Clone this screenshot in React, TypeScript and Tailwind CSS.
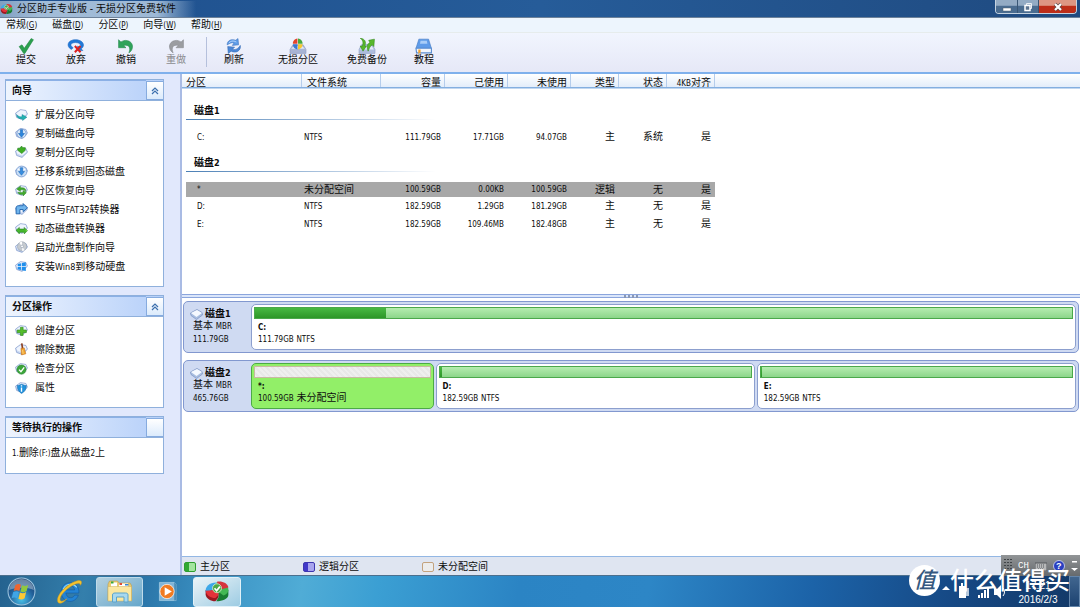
import { useState } from "react";
import type { ReactNode } from "react";

/* Latin runs are set a little smaller than the Chinese text around them. */
function Mixed({ text, large }: { text: string; large?: boolean }) {
  return (
    <>
      {text.split(/([\x21-\x7e]+)/).map((run, i) =>
        i % 2 ? (
          <span key={i} className={`font-['DejaVu_Sans_Condensed','DejaVu_Sans',sans-serif] ${large ? "text-[9px]" : "text-[8px]"}`}>{run}</span>
        ) : (
          run
        )
      )}
    </>
  );
}

/* ---------- icons ---------- */

function DiskBase() {
  return (
    <>
      <path d="M1 9.5 10 3l10 1.5 3 7L13 21 3 17.5Z" fill="#c9d8f2" stroke="#7f97cb" strokeWidth="1.3" />
      <path d="M2.5 9.6 10.5 4.2l9 1.3 2 5.5-8.500 6.400L4 13.800Z" fill="#eef4fd" />
    </>
  );
}

const overlays: Record<string, ReactNode> = {
  extend: <path d="M3 12c3 4 7 5 10 4v-4l9 5-8 6v-3C8 21 3 18 3 12Z" fill="#24b3b0" stroke="#0d7f96" strokeWidth=".8" />,
  copyDisk: (
    <>
      <circle cx="12" cy="12" r="8.500" fill="#d8e8f8" stroke="#6c92cc" strokeWidth="1.500" />
      <path d="M10 5h4v7h3.500L12 19l-5.500-7H10Z" fill="#2b86dd" stroke="#1563b5" />
    </>
  ),
  copyPart: <path d="m12 0 2.500 3H19v5l-6.500 6L5 8V4h4.500Z" fill="#3fae22" stroke="#1e7d16" />,
  migrate: (
    <>
      <circle cx="12" cy="12" r="10" fill="#c8ddf4" stroke="#7a9cd2" strokeWidth="1.500" />
      <path d="M10 5h4v7h3.500L12 19l-5.500-7H10Z" fill="#378ee0" stroke="#1c68b8" />
      <path d="m5 7 3 2M19 7l-3 2" stroke="#fff" strokeWidth="2" />
    </>
  ),
  recover: <path d="M3 9 10 4v3c7-1 11 2 10 7-2-3-5-4-10-3v3ZM21 16l-6 6v-3c-5 1-9-1-10-4 3 1 6 1 10 0v-3Z" fill="#42ac2b" stroke="#207a19" strokeWidth=".8" />,
  convert: <path d="M2 20V9c0-3 2-4 5-4h8V1l8 8-8 7v-4H9v8Z" fill="#6fb4ec" stroke="#195ea9" strokeWidth="1.600" />,
  dynamic: (
    <>
      <path d="m2 15 6-5v3h9v-3l6 6-6 6v-3H8v3Z" fill="#46b72d" stroke="#207a19" />
      <path d="m18 12 2 3h3l-2 3" fill="#7cdb4f" />
    </>
  ),
  cd: (
    <>
      <circle cx="13" cy="10" r="8.500" fill="#c6cbd0" stroke="#8a98aa" />
      <path d="m13 10-5-7a9 9 0 0 1 5-1.500Z" fill="#fff" />
      <path d="m13 10 5 7a9 9 0 0 1-5 1.500Z" fill="#f6f8fa" />
      <circle cx="13" cy="10" r="2.500" fill="#fff" stroke="#8593a5" />
    </>
  ),
  windows: <path d="M5 7.500 11 6v5.500H5Zm7.500-1.800L20 4v7.500h-7.500ZM5 13h6v5.500L5 17Zm7.500 0H20v7.500l-7.500-1.800Z" fill="#1f8fec" />,
  add: <path d="M10 6h5v5h6v5h-6v5h-5v-5H4v-5h6Z" fill="#55bd2b" stroke="#237f17" />,
  wipe: (
    <>
      <path d="m11 1 3-.5 1.500 10-3 .5Z" fill="#8a3f20" />
      <path d="m11 10 6-1 3 11-8 2Z" fill="#f2a832" stroke="#bd6515" />
      <path d="m14 13 1 7" stroke="#fff0b5" />
    </>
  ),
  check: (
    <>
      <circle cx="12" cy="14" r="8.500" fill="#3ca63a" stroke="#1f7a2c" />
      <path d="m7.500 14 3.500 4 6-8" fill="none" stroke="#fff" strokeWidth="2.500" />
    </>
  ),
  info: (
    <>
      <path d="M4 8c4 1 5-2 8-2s5 3 9 2c0 8-3 12-9 15C7 20 4 16 4 8Z" fill="#2192dc" stroke="#1468ae" />
      <path d="M12 12v8M12 8v2" stroke="#fff" strokeWidth="2.500" />
    </>
  ),
};

function SideIcon({ name }: { name: string }) {
  return (
    <svg viewBox="0 0 24 24" className="h-[13px] w-[13px] shrink-0" aria-hidden="true">
      <DiskBase />
      {overlays[name]}
    </svg>
  );
}

function Pie({ className }: { className: string }) {
  return (
    <svg viewBox="0 0 32 28" className={className} aria-hidden="true">
      <path d="M2 12v6c1 5 6 8 12 8l4-5V12Z" fill="#9c1720" />
      <path d="M18 13v8l-3 5c8 0 15-3 15-8v-6Z" fill="#187d32" />
      <path d="M15 11 2 15C1 8 7 3 15 3Z" fill="#3da8e8" />
      <path d="m15 12-13 1c1 6 6 9 12 9l4-4Z" fill="#e4323a" />
      <path d="M15 3c9-1 16 4 15 10-1 3-3 5-6 6l-8-6Z" fill="#43b854" />
      <path d="M16 2c7-1 13 2 14 7l-12 3Z" fill="#d5343c" />
      <circle cx="16" cy="10" r="5.500" fill="#4ca945" stroke="#d7edcf" />
      <path d="m13 10 2.500 3 4-5" fill="none" stroke="#fff" strokeWidth="2" />
    </svg>
  );
}

const toolIcons: Record<string, ReactNode> = {
  commit: <path d="M3 15 8 12l4 6L24 1l4 2-15 24h-2Z" fill="#2ba04f" stroke="#22863f" />,
  discard: (
    <>
      <path d="M7 20C-3 15 0 3 14 3s18 11 10 16l3 3h-9v-8l3 2c5-4 0-8-7-8-8 0-11 5-4 9Z" fill="#2178d8" stroke="#1766c2" />
      <path d="m13 14 10 11M23 14 13 25" stroke="#dc2020" strokeWidth="3.500" />
    </>
  ),
  undo: <path d="m2 3 4 4c10-7 23 0 20 11-1 4-3 6-6 8 4-9 0-15-9-13l4 4H2Z" fill="#30a35b" stroke="#24884a" />,
  redo: <path d="m28 3-4 4C14 0 1 7 4 18c1 4 3 6 6 8-4-9 0-15 9-13l-4 4h13Z" fill="#9b9da1" stroke="#85878c" />,
  refresh: (
    <>
      <path d="M3 12C3 4 11 1 18 4l4-3 1 11-11 1 3-4c-5-2-6 0-12 3Z" fill="#5e9ce7" stroke="#3a71bd" />
      <path d="M26 13c2 8-7 15-16 10l-5 4-1-12 12 1-4 4c6 1 10-1 14-7Z" fill="#4b87d6" stroke="#3469b3" />
      <path d="M6 9c4-5 9-4 13-2" fill="none" stroke="#c6e1ff" strokeWidth="1.500" />
    </>
  ),
  lossless: (
    <>
      <path d="m1 20 5-8h18l5 8v7H1Z" fill="#a8b4d4" stroke="#8b99bf" />
      <path d="m3 19 5-5h14l5 5Z" fill="#e3e9f7" />
      <path d="M14 10V1C8 2 6 6 6 10Z" fill="#e3442d" />
      <path d="M15 10V1c6 1 8 5 8 9Z" fill="#47aa3e" />
      <path d="M14 11v9c-5-1-8-4-8-9Z" fill="#3a78d4" />
      <path d="M15 11v9c5-1 8-4 8-9Z" fill="#f7c82f" />
    </>
  ),
  backup: (
    <>
      <path d="m1 20 5-9h18l5 9v7H1Z" fill="#aebddd" stroke="#8f9fc5" />
      <path d="m3 20 4-6h16l4 6Z" fill="#e3eaf8" />
      <path d="M3 0c9 2 11 7 8 14h3l-6 9-5-9h4C9 8 8 4 3 0ZM17 23c-3-8-2-12 3-15l-2-4L28 2l-1 13-3-3c-4 3-5 6-7 11Z" fill="#57b82b" stroke="#33881a" />
    </>
  ),
  tutorial: (
    <>
      <path d="M6 2h17l5 16H1Z" fill="#5e9be9" stroke="#3c74c0" />
      <path d="m9 5-1 5h13l-1-5Z" fill="#a9cdf8" />
      <path d="M1 18h27v8H2Z" fill="#f2f6fc" stroke="#5d8fd1" strokeWidth="2" />
      <path d="M5 20h4v8l-2-2-2 2Z" fill="#f4a32e" />
    </>
  ),
};

function DriveIcon() {
  return (
    <svg viewBox="0 0 26 22" className="h-[11px] w-[13px] shrink-0" aria-hidden="true">
      <path d="m1 8 13-7 10 6 1 5-12 9L2 13Z" fill="#a9bee0" stroke="#7f96c4" strokeWidth="1.500" />
      <path d="M2 8 14 2l10 6-11 8Z" fill="#f5f9ff" />
    </svg>
  );
}

/* ---------- data ---------- */

const menus = [
  ["常规", "G"],
  ["磁盘", "D"],
  ["分区", "P"],
  ["向导", "W"],
  ["帮助", "H"],
];

const tools = [
  { icon: "commit", label: "提交", width: "w-[50px]" },
  { icon: "discard", label: "放弃", width: "w-[50px]" },
  { icon: "undo", label: "撤销", width: "w-[50px]" },
  { icon: "redo", label: "重做", width: "w-[50px]", disabled: true },
  { icon: "refresh", label: "刷新", width: "w-[54px]" },
  { icon: "lossless", label: "无损分区", width: "w-[74px]" },
  { icon: "backup", label: "免费备份", width: "w-[64px]" },
  { icon: "tutorial", label: "教程", width: "w-[50px]" },
];

const wizards = [
  ["extend", "扩展分区向导"],
  ["copyDisk", "复制磁盘向导"],
  ["copyPart", "复制分区向导"],
  ["migrate", "迁移系统到固态磁盘"],
  ["recover", "分区恢复向导"],
  ["convert", "NTFS与FAT32转换器"],
  ["dynamic", "动态磁盘转换器"],
  ["cd", "启动光盘制作向导"],
  ["windows", "安装Win8到移动硬盘"],
];

const operations = [
  ["add", "创建分区"],
  ["wipe", "擦除数据"],
  ["check", "检查分区"],
  ["info", "属性"],
];

const columns = ["分区", "文件系统", "容量", "己使用", "未使用", "类型", "状态", "4KB对齐"];

const disk1 = [["C:", "NTFS", "111.79GB", "17.71GB", "94.07GB", "主", "系统", "是"]];
const disk2 = [
  ["*", "未分配空间", "100.59GB", "0.00KB", "100.59GB", "逻辑", "无", "是"],
  ["D:", "NTFS", "182.59GB", "1.29GB", "181.29GB", "主", "无", "是"],
  ["E:", "NTFS", "182.59GB", "109.46MB", "182.48GB", "主", "无", "是"],
];

/* ---------- sidebar ---------- */

function Panel({ title, items, children }: { title: string; items?: string[][]; children?: ReactNode }) {
  const [open, setOpen] = useState(true);
  return (
    <section className="border border-[#8fb0dc] bg-white">
      <header className="flex h-[21px] border-b border-[#8fb0dc] bg-linear-to-r from-[#eef4fe] to-[#b5cff9]">
        <h2 className="flex-1 border-t border-[#8bb0e6] pl-[6px] text-[10px] leading-[20px] font-bold">{title}</h2>
        <button
          type="button"
          aria-label={`折叠 ${title}`}
          onClick={() => items && setOpen(!open)}
          className="mt-px flex w-[17px] items-center justify-center border border-r-0 border-[#86abdf] bg-linear-to-b from-white to-[#dcebfc]"
        >
          {items && (
            <svg viewBox="0 0 8 8" className="h-2 w-2" fill="none" stroke="#3b6fae" strokeWidth="1.2" aria-hidden="true">
              <path d="m1 4 3-3 3 3M1 7l3-3 3 3" />
            </svg>
          )}
        </button>
      </header>
      {items && open && (
        <ul className="pt-1 pb-[10px]">
          {items.map(([icon, label]) => (
            <li key={label}>
              <button type="button" className="flex h-[19px] w-full items-center gap-[7px] pl-[9px] text-left whitespace-nowrap">
                <SideIcon name={icon} />
                <span><Mixed text={label} large /></span>
              </button>
            </li>
          ))}
        </ul>
      )}
      {children}
    </section>
  );
}

/* ---------- partition table ---------- */

function Group({ name, rows, selected, first }: { name: string; rows: string[][]; selected?: number; first?: boolean }) {
  return (
    <tbody>
      <tr>
        <th colSpan={8} className={`p-0 text-left align-bottom font-bold ${first ? "h-[32px]" : "h-[26px]"}`}>
          <div className="pl-2 leading-[16px]"><Mixed text={name} large /></div>
          <div className="h-px w-[250px] bg-linear-to-r from-[#4a7fb5] to-white" />
        </th>
      </tr>
      <tr><td colSpan={8} className={`p-0 ${first ? "h-[8px]" : "h-[10px]"}`} /></tr>
      {rows.map((row, i) => (
        <tr key={row[0]} className={i === selected ? "bg-[#a8a8a8]" : ""}>
          {row.map((cell, c) => (
            <td
              key={c}
              className={`p-0 leading-[14px] ${i === selected ? "h-[14px]" : "h-[18px]"} ${c === 0 ? "pl-[11px]" : c === 1 ? "pl-[2px]" : "pr-1 text-right"}`}
            >
              <Mixed text={cell} />
            </td>
          ))}
        </tr>
      ))}
    </tbody>
  );
}

function PartitionTable() {
  return (
    <div className="h-[220px] bg-[linear-gradient(#ffffff,#e3edfa_13px,#84afe0_13px,#84afe0_14px,#ffffff_15px)] bg-[length:100%_16px] bg-no-repeat">
      <table className="ml-1 w-[529px] table-fixed border-collapse">
        <colgroup>
          <col className="w-[116px]" />
          <col className="w-[79px]" />
          <col className="w-[64px]" />
          <col className="w-[63px]" />
          <col className="w-[63px]" />
          <col className="w-[48px]" />
          <col className="w-[48px]" />
          <col className="w-[48px]" />
        </colgroup>
        <thead>
          <tr>
            {columns.map((c, i) => (
              <th
                key={c}
                scope="col"
                className={`h-[14px] p-0 font-normal whitespace-nowrap ${i < 2 ? "text-left" : "text-right"}`}
              >
                <div className={`mb-px h-[13px] border-r border-[#b5cdec] leading-[17px] ${i === 1 ? "pl-[5px]" : i > 1 ? "pr-[3px]" : ""}`}>
                  <Mixed text={c} />
                </div>
              </th>
            ))}
          </tr>
        </thead>
        <Group name="磁盘1" rows={disk1} first />
        <Group name="磁盘2" rows={disk2} selected={0} />
      </table>
    </div>
  );
}

/* ---------- disk map ---------- */

function Segment({ name, info, grow, used, free }: { name: string; info: string; grow: string; used?: string; free?: boolean }) {
  return (
    <button
      type="button"
      className={`flex min-w-0 flex-col rounded-[5px] border p-[2px] text-left ${grow} ${free ? "border-[#4cab45] bg-[#92ef68]" : "border-[#8c9fce] bg-white"}`}
    >
      <span
        className={`flex h-3 w-full border ${free ? "border-[#c9b9a3] bg-[repeating-linear-gradient(45deg,#efefef_0px,#efefef_2px,#e8e8e8_2px,#e8e8e8_4px)]" : "border-[#4ba84b] bg-linear-to-b from-[#b5ecb0] to-[#8cd68a]"}`}
      >
        {used && <span className={`bg-linear-to-b from-[#48b943] to-[#2d9628] ${used}`} />}
      </span>
      <span className="pt-[2px] pl-1 leading-[11px] font-bold"><Mixed text={name} /></span>
      <span className="pl-1 leading-[11px]"><Mixed text={info} /></span>
    </button>
  );
}

function DiskCard({ name, size, children }: { name: string; size: string; children: ReactNode }) {
  return (
    <div className="flex h-[52px] rounded-[5px] border border-[#8298cf] bg-[#cfdaf2] p-[2px]">
      <div className="w-[65px] shrink-0 pt-[4px] pl-1">
        <div className="flex items-center gap-[2px] leading-[12px] font-bold"><DriveIcon /><span><Mixed text={name} large /></span></div>
        <div className="pl-[3px] leading-[12px]"><Mixed text="基本 MBR" /></div>
        <div className="pl-[3px] leading-[11px]"><Mixed text={size} /></div>
      </div>
      <div className="flex flex-1 gap-[2px]">{children}</div>
    </div>
  );
}

/* ---------- taskbar ---------- */

function StartOrb() {
  return (
    <svg viewBox="0 0 56 56" className="h-[29px] w-[29px]" aria-hidden="true">
      <defs>
        <radialGradient id="orb" cx=".5" cy=".8" r=".8">
          <stop offset="0" stopColor="#48c1e8" />
          <stop offset=".55" stopColor="#23639d" />
          <stop offset="1" stopColor="#173a66" />
        </radialGradient>
      </defs>
      <circle cx="28" cy="28" r="26" fill="url(#orb)" stroke="#9ec5df" strokeWidth="2" />
      <path d="M4 25C6 10 17 4 28 4s22 7 24 21c-14-6-34-5-48 0Z" fill="#fff" opacity=".35" />
      <path d="M16 16c4-3 8-3 11-1l-3 12c-4-2-8-2-11 0Z" fill="#ee6530" />
      <path d="M29 16c4 2 8 2 12-1l-3 12c-4 3-8 3-12 1Z" fill="#91c83e" />
      <path d="M12 29c4-2 8-2 11 0l-3 12c-4-2-8-2-11 0Z" fill="#40a5e6" />
      <path d="M25 30c4 2 8 2 12-1l-3 12c-4 3-8 3-12 1Z" fill="#fdc934" />
    </svg>
  );
}

function IeIcon() {
  return (
    <svg viewBox="0 0 52 48" className="h-[25px] w-[27px]" aria-hidden="true">
      <path d="M43 31c-3 8-9 12-16 12C17 43 10 35 10 25S17 7 27 7s18 8 17 20H19c1 6 4 9 9 9 4 0 6-2 8-5ZM19 21h17c-1-5-4-8-8-8-5 0-8 3-9 8Z" fill="#2383d3" stroke="#10569f" />
      <path d="M14 19c3-6 8-9 14-9 5 0 9 2 12 6" fill="none" stroke="#8fd8f8" strokeWidth="2" />
      <path d="M4 45C-2 33 21 8 43 3c6-1 8 3 4 9 0-4-3-5-8-3C22 15 5 33 8 41c2 4 9 0 13-3C15 45 8 49 4 45Z" fill="#f4c42f" stroke="#d99b19" />
    </svg>
  );
}

function FolderIcon() {
  return (
    <svg viewBox="0 0 52 46" className="h-[23px] w-[26px]" aria-hidden="true">
      <path d="M2 8 5 2h16l3 4h22l3 5v30H2Z" fill="#e8cb72" stroke="#b8923d" />
      <path d="M8 5h12v9H8ZM24 7h18v8H24Z" fill="#fff" />
      <path d="M8 3h5v4H8Z" fill="#34a83d" />
      <path d="M25 6h5v4h-5Z" fill="#e04a34" />
      <path d="M36 8h7v3h-7Z" fill="#3584d4" />
      <path d="M2 13h47v29H2Z" fill="#fbe7a0" stroke="#cfae57" />
      <path d="M11 44V30c0-3 2-4 5-4h21c3 0 5 1 5 4v14h-8V34H19v10Z" fill="#a8d8ef" stroke="#5ba3cb" strokeWidth="2" />
    </svg>
  );
}

function PlayerIcon() {
  return (
    <svg viewBox="0 0 46 44" className="h-[21px] w-[22px]" aria-hidden="true">
      <path d="M5 3h31l4 4v34H5Z" fill="#80b5d8" stroke="#cfe7f5" />
      <path d="m36 3 5 4v34h-5Z" fill="#4a8db8" />
      <circle cx="21" cy="22" r="15" fill="#f07b22" stroke="#fff" strokeWidth="1.500" />
      <path d="m16 13 15 9-15 9Z" fill="#fff" />
    </svg>
  );
}

const legend = [
  { label: "主分区", swatch: "border-[#2f9e2f] bg-linear-to-r from-[#32a832] from-40% to-[#a3e59f] to-40%" },
  { label: "逻辑分区", swatch: "border-[#3d36b0] bg-linear-to-r from-[#4038c8] from-40% to-[#a8a4ee] to-40%" },
  { label: "未分配空间", swatch: "border-[#c3a27e] bg-[#ececec]" },
];

export default function App() {
  return (
    <div className="relative flex min-h-screen flex-col bg-[#e1e8fc] font-['Liberation_Sans','Noto_Sans_CJK_SC',sans-serif] text-[10px] text-[#0c0c0c]">
      <header className="flex h-[18px] items-center border-b border-[#6d829a] bg-linear-to-r from-[#1e4f8d] via-[#265c99] to-[#1f4a80]">
        <div className="flex h-[16px] items-center gap-1 bg-[linear-gradient(90deg,#7f9fc2,#a3bdd8_20%,#9db8d5_80%,transparent)] pr-5 leading-[16px]">
          <Pie className="h-[12px] w-[13px]" />
          <h1>分区助手专业版 - 无损分区免费软件</h1>
        </div>
        <div className="mr-[3px] ml-auto flex h-[14px] self-start overflow-hidden rounded-b-[4px] border border-t-0 border-[#c4d2e0]">
          <button type="button" aria-label="最小化" className="flex w-[22px] items-center justify-center border-r border-[#395675] bg-linear-to-b from-[#93abc4] from-40% to-[#4a6c90] to-50%">
            <svg viewBox="0 0 10 10" className="h-[10px] w-[10px]" aria-hidden="true"><path d="M1 6h8v3H1Z" fill="#fff" stroke="#52606e" strokeWidth=".5" /></svg>
          </button>
          <button type="button" aria-label="还原" className="flex w-[21px] items-center justify-center border-r border-[#395675] bg-linear-to-b from-[#93abc4] from-40% to-[#4a6c90] to-50%">
            <svg viewBox="0 0 10 10" className="h-[10px] w-[10px]" fill="none" aria-hidden="true">
              <path d="M3.500 1.500h5v5h-5Z" stroke="#e8edf2" />
              <path d="M2 3.500h5v5H2Z" fill="#5c7490" stroke="#fff" strokeWidth="1.500" />
            </svg>
          </button>
          <button type="button" aria-label="关闭" className="flex w-[37px] items-center justify-center bg-linear-to-b from-[#dd9683] from-40% to-[#bd2d18] to-50%">
            <svg viewBox="0 0 10 10" className="h-[10px] w-[10px]" aria-hidden="true">
              <path d="m2 2 6 6M8 2 2 8" stroke="#5b4646" strokeWidth="3.500" />
              <path d="m2 2 6 6M8 2 2 8" stroke="#fff" strokeWidth="2.200" />
            </svg>
          </button>
        </div>
      </header>

      <nav className="flex h-[15px] items-center gap-[15px] border-b border-[#e6ecec] bg-[#edf5fd] pl-[6px]">
        {menus.map(([label, key]) => (
          <button key={key} type="button" className="leading-[14px] whitespace-nowrap">
            {label}
            <span className="font-['DejaVu_Sans_Condensed','DejaVu_Sans',sans-serif] text-[8px]">(<u>{key}</u>)</span>
          </button>
        ))}
      </nav>

      <div className="flex h-[41px] items-center border-b-2 border-[#7fb0ec] bg-linear-to-b from-[#f1f5fe] to-[#e6e8f7] pb-[2px] pl-px">
        {tools.map((t) => (
          <div key={t.label} className="flex items-center">
            {t.icon === "refresh" && <span className="h-[30px] w-[6px] border-r border-[#b5c0dc]" />}
            <button type="button" disabled={t.disabled} className={`flex flex-col items-center ${t.width} ${t.disabled ? "text-[#8b8b8f]" : ""}`}>
              <svg viewBox="0 0 30 28" className="h-[16px] w-[18px]" aria-hidden="true">{toolIcons[t.icon]}</svg>
              <span className="leading-[12px]">{t.label}</span>
            </button>
          </div>
        ))}
      </div>

      <div className="flex flex-1">
        <aside className="flex w-[182px] shrink-0 flex-col gap-[8px] border-r-2 border-[#a9bbe4] pt-[5px] pr-4 pl-[5px]">
          <Panel title="向导" items={wizards} />
          <Panel title="分区操作" items={operations} />
          <Panel title="等待执行的操作">
            <p className="h-[35px] pl-[6px] leading-[30px]"><Mixed text="1.删除(F:)盘从磁盘2上" /></p>
          </Panel>
        </aside>

        <main className="flex min-w-0 flex-1 flex-col bg-white">
          <PartitionTable />
          <div className="flex h-[4px] items-center justify-center gap-[2px] border-y border-[#8ba5dc] bg-[#dbe6fa]">
            {[0, 1, 2, 3].map((n) => <span key={n} className="h-[3px] w-[2px] bg-[#8a98b5]" />)}
          </div>
          <div className="flex flex-1 flex-col gap-[7px] pt-[3px] pr-px pl-px">
            <DiskCard name="磁盘1" size="111.79GB">
              <Segment name="C:" info="111.79GB NTFS" grow="flex-1" used="w-[16%]" />
            </DiskCard>
            <DiskCard name="磁盘2" size="465.76GB">
              <Segment name="*:" info="100.59GB 未分配空间" grow="flex-[177]" free />
              <Segment name="D:" info="182.59GB NTFS" grow="flex-[314]" used="w-[2px]" />
              <Segment name="E:" info="182.59GB NTFS" grow="flex-[314]" used="w-px" />
            </DiskCard>
          </div>
          <footer className="flex h-[19px] items-center border-t border-[#93b7e4] bg-[#dfe5f1] pt-px pl-[2px]">
            {legend.map((l) => (
              <div key={l.label} className="flex w-[119px] items-center gap-1">
                <span className={`h-[10px] w-[12px] rounded-[2px] border ${l.swatch}`} />
                <span>{l.label}</span>
              </div>
            ))}
          </footer>
        </main>
      </div>

      <footer className="flex h-[32px] items-center border-t border-[#4c6f8d] bg-[linear-gradient(100deg,#24628f_0%,#347fac_8%,#276fa3_12%,#3c93c4_20%,#50acd6_28%,#3b9fd3_35%,#2b84c4_48%,#2d86c6_60%,#1c63a8_75%,#164985_88%,#123866_100%)]">
        <button type="button" aria-label="开始" className="flex w-[43px] justify-center"><StartOrb /></button>
        <button type="button" aria-label="Internet Explorer" className="flex w-[53px] justify-center"><IeIcon /></button>
        <button type="button" aria-label="资源管理器" className="flex h-[30px] w-[47px] items-center justify-center rounded-[3px] border border-[#bfdbea] bg-linear-to-br from-[#b3d0df] to-[#65a7cb]"><FolderIcon /></button>
        <button type="button" aria-label="媒体播放器" className="flex w-[50px] justify-center"><PlayerIcon /></button>
        <button type="button" aria-label="分区助手" className="flex h-[30px] w-[48px] items-center justify-center rounded-[3px] border border-[#e1f1f8] bg-linear-to-br from-[#eaf3f7] to-[#9dcce3]"><Pie className="h-[23px] w-[26px]" /></button>
        <div className="ml-auto flex h-full items-center text-white">
          <svg viewBox="0 0 70 20" className="h-[20px] w-[70px]" fill="#fff" aria-hidden="true">
            <path d="m5 8 4-4 4 4Z" />
            <path d="M22 4h2V1h2v3h3v12h-7Z" />
            <path d="M29 6h3v8h-3Z" fill="#b7c9dc" />
            <path d="M41 13h2v3h-2Zm3-2h2v5h-2Zm3-3h2v8h-2Zm3-3h2v11h-2Z" />
            <path d="M57 7h3l4-4v14l-4-4h-3Z" />
            <path d="M66 6c2 3 2 5 0 8" fill="none" stroke="#fff" />
          </svg>
          <div className="flex w-[62px] flex-col items-center pt-[2px] leading-[14px]">
            <time>17:21</time>
            <time>2016/2/3</time>
          </div>
          <button type="button" aria-label="显示桌面" className="h-full w-[11px] border border-[#6385aa] bg-linear-to-b from-[#41668f] to-[#1c4270]" />
        </div>
      </footer>

      <div className="absolute right-0 bottom-[31px] flex h-[21px] w-[79px] items-center gap-[6px] bg-linear-to-b from-[#929597] to-[#666a6d] pl-[3px] text-white">
        <svg viewBox="0 0 8 14" className="h-[14px] w-[8px]" aria-hidden="true">
          <path d="M1 0v14M4 0v14M7 0v14" stroke="#414548" strokeWidth="2" strokeDasharray="1 2" />
        </svg>
        <span className="font-['Liberation_Mono',monospace] text-[9px] leading-[10px]">CH</span>
        <svg viewBox="0 0 12 10" className="h-[10px] w-[12px]" aria-hidden="true">
          <path d="M0 2h12v8H0Z" fill="#b6b8b9" stroke="#55595c" />
          <path d="M2 4h8M2 6h8M3 8h6" stroke="#55595c" strokeDasharray="1 1" />
        </svg>
        <button type="button" aria-label="帮助" className="flex h-[12px] w-[12px] items-center justify-center rounded-full border border-[#bcc3e7] bg-[#2a3fc0] text-[9px] leading-[10px] font-bold">?</button>
        <svg viewBox="0 0 7 12" className="h-[12px] w-[7px]" fill="#fff" aria-hidden="true">
          <path d="M1 1h5v1.500H1ZM0 8h7l-3.500 3Z" />
        </svg>
      </div>

      <div className="pointer-events-none absolute right-[10px] bottom-[11px] flex items-center gap-[10px] whitespace-nowrap text-white">
        <span className="flex h-[31px] w-[31px] items-center justify-center rounded-full bg-white text-[22px] leading-[31px] font-medium text-[#365980] italic">值</span>
        <span className="text-[24px] leading-[24px] font-medium">什么值得买</span>
      </div>
    </div>
  );
}
